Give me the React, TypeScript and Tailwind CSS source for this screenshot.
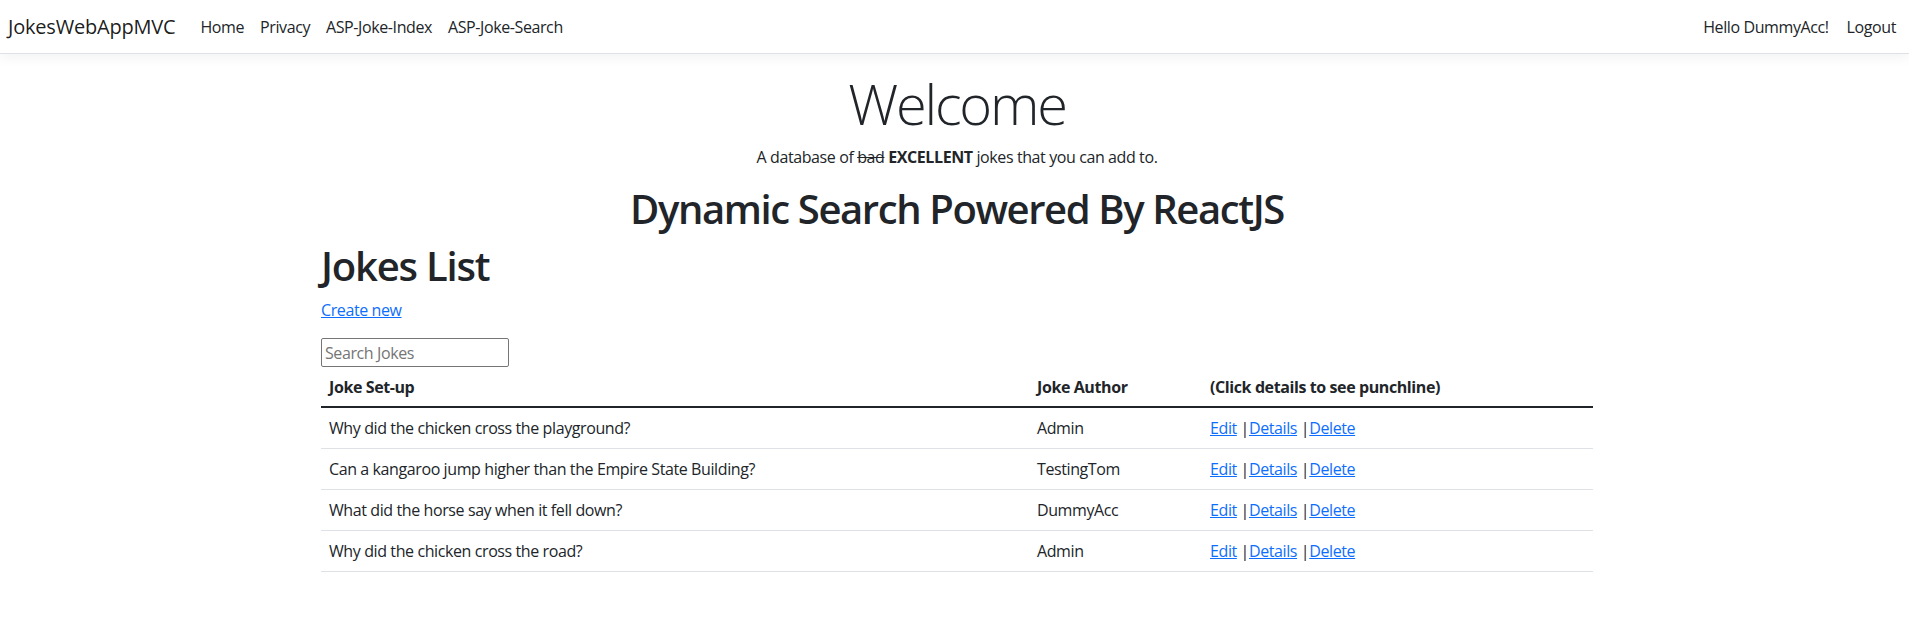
import React, { useState } from "react";

interface Joke {
  question: string;
  author: string;
}

const jokes: Joke[] = [
  { question: "Why did the chicken cross the playground?", author: "Admin" },
  { question: "Can a kangaroo jump higher than the Empire State Building?", author: "TestingTom" },
  { question: "What did the horse say when it fell down?", author: "DummyAcc" },
  { question: "Why did the chicken cross the road?", author: "Admin" },
];

const font = "font-['Open_Sans','Noto_Sans',sans-serif]";

export default function App() {
  const [query, setQuery] = useState("");

  const filtered = jokes.filter((j) =>
    j.question.toLowerCase().includes(query.toLowerCase())
  );

  return (
    <div className={`min-h-[626px] bg-white text-[#212529] tracking-[-0.025em] ${font}`}>
      {/* Navbar */}
      <nav className="flex h-[54px] items-center justify-between border-b border-[#dee2e6] bg-white pl-[8px] pr-[13px] shadow-[0_4px_12px_rgba(0,0,0,0.05)]">
        <div className="flex items-center">
          <a className="mr-[25px] text-[20px] leading-[30px] tracking-[-0.01em] text-black/90">JokesWebAppMVC</a>
          <ul className="flex items-center gap-[16px] text-[16px] leading-6">
            <li><a>Home</a></li>
            <li><a>Privacy</a></li>
            <li><a>ASP-Joke-Index</a></li>
            <li><a>ASP-Joke-Search</a></li>
          </ul>
        </div>
        <ul className="flex items-center gap-[18px] text-[16px] leading-6">
          <li>Hello DummyAcc!</li>
          <li><a>Logout</a></li>
        </ul>
      </nav>

      <div className="pl-[5px]">
        <main className="mx-auto w-[1272px] pt-[16px] text-[16px] leading-6">
          <div className="text-center">
            <h1 className="mb-2 text-[56px] font-light leading-[67px] tracking-[-0.04em]">Welcome</h1>
            <p>
              A database of <s>bad</s> <b>EXCELLENT</b> jokes that you can add to.
            </p>
          </div>

          <h1 className="mt-[16px] text-center text-[40px] font-semibold leading-[48px] tracking-[-0.035em]">
            Dynamic Search Powered By ReactJS
          </h1>

          <h1 className="mt-[9px] text-[40px] font-semibold leading-[48px] tracking-[-0.03em]">Jokes List</h1>
          <p className="mt-[8px]">
            <a className="cursor-pointer text-[#0d6efd] underline">Create new</a>
          </p>

          <input
            value={query}
            onChange={(e) => setQuery(e.target.value)}
            placeholder="Search Jokes"
            className="mt-[16px] h-[29px] w-[188px] rounded-[2px] border border-[#767676] px-[3px] text-[16px] outline-none placeholder:text-[#757575]"
          />

          <table className="w-full border-collapse text-left">
            <thead>
              <tr className="border-b-2 border-[#212529]">
                <th className="w-[708px] px-2 pt-2 pb-[7px] font-bold">Joke Set-up</th>
                <th className="w-[173px] px-2 pt-2 pb-[7px] font-bold">Joke Author</th>
                <th className="px-2 pt-2 pb-[7px] font-bold">(Click details to see punchline)</th>
              </tr>
            </thead>
            <tbody>
              {filtered.map((joke, idx) => (
                <tr key={idx} className="border-b border-[#dee2e6]">
                  <td className="px-2 py-2">{joke.question}</td>
                  <td className="px-2 py-2">{joke.author}</td>
                  <td className="px-2 py-2">
                    <a className="cursor-pointer text-[#0d6efd] underline">Edit</a> |
                    <a className="cursor-pointer text-[#0d6efd] underline">Details</a> |
                    <a className="cursor-pointer text-[#0d6efd] underline">Delete</a>
                  </td>
                </tr>
              ))}
            </tbody>
          </table>
        </main>
      </div>
    </div>
  );
}
